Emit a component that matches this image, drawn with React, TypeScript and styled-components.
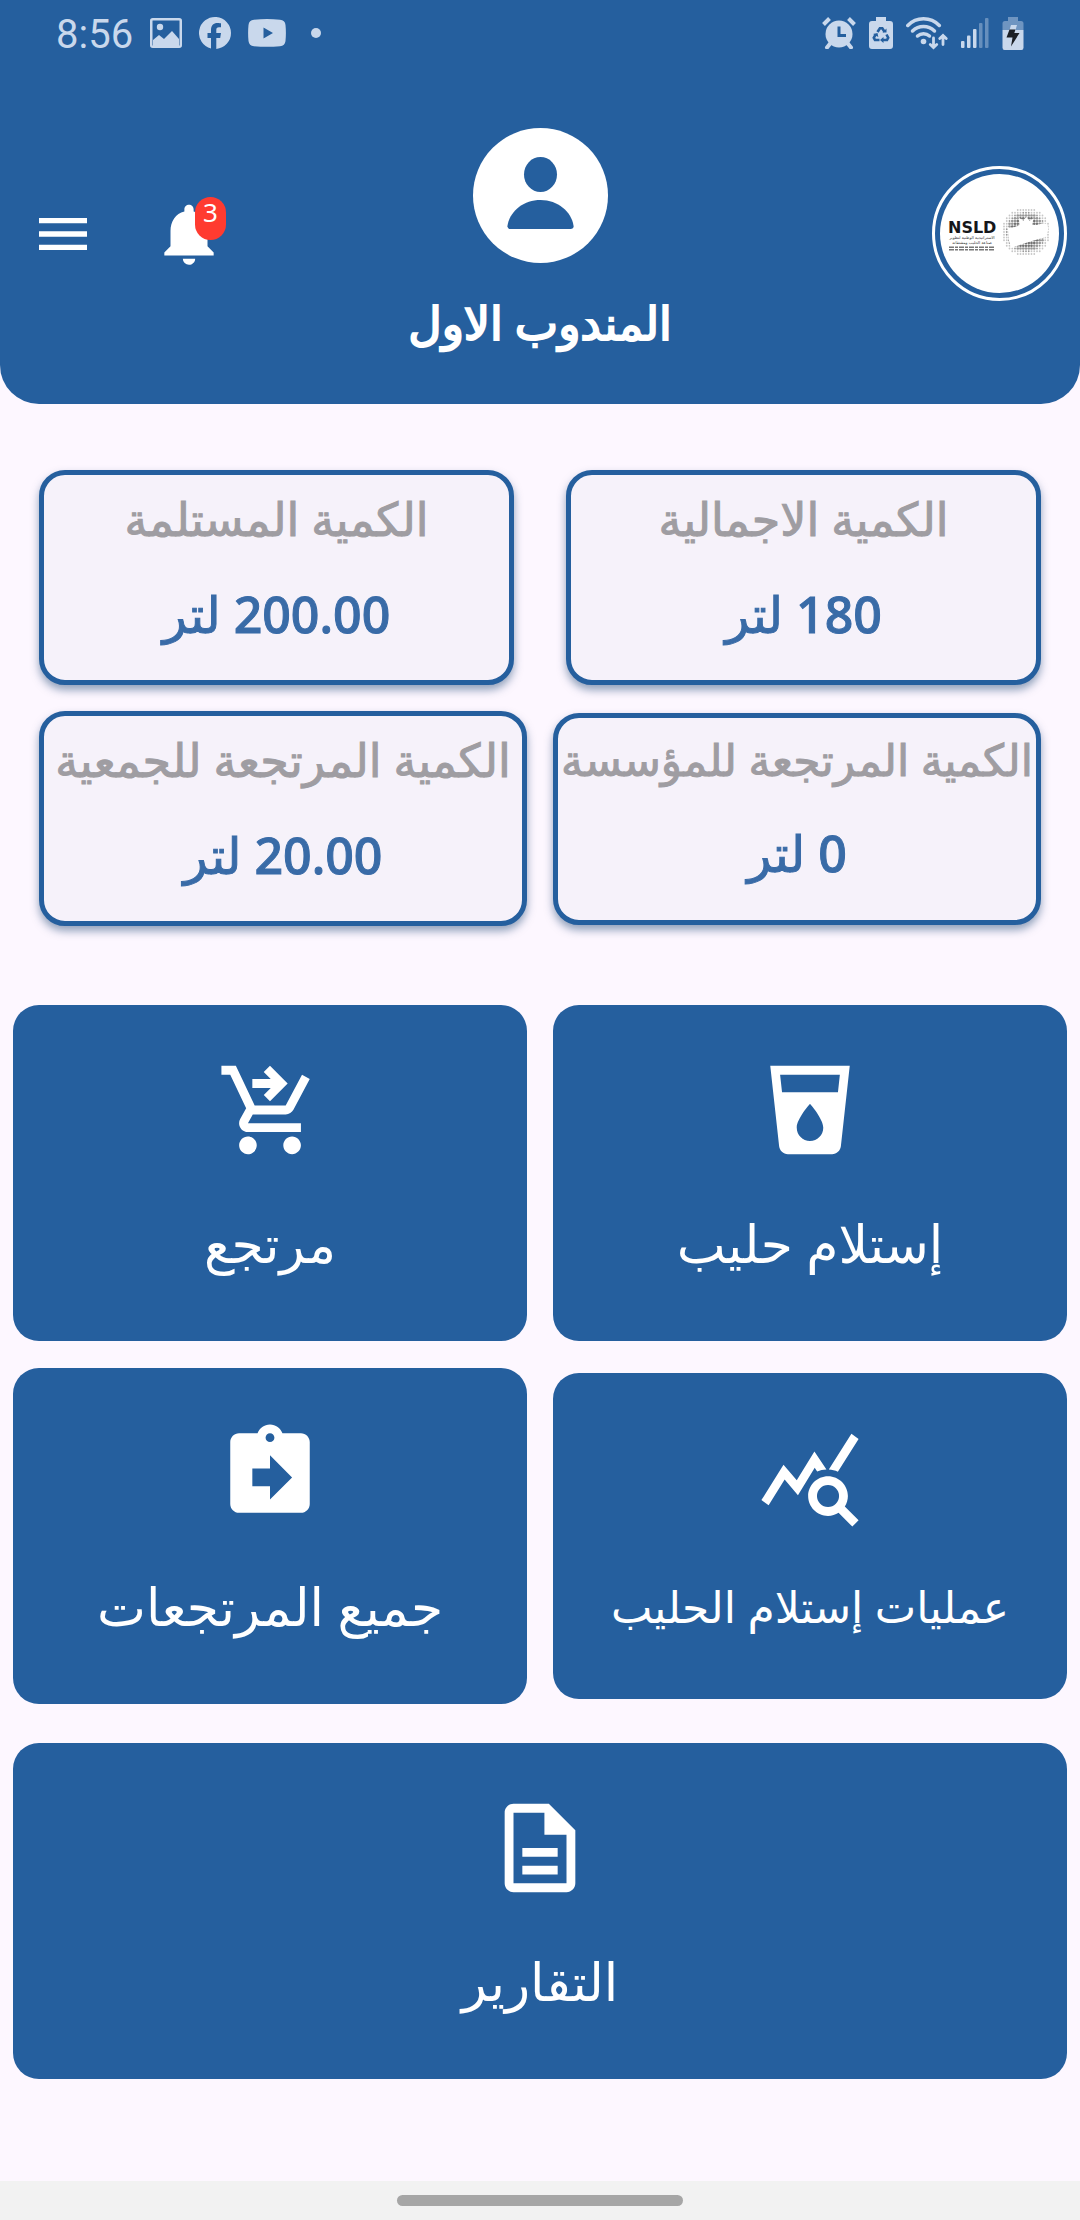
import React from "react";
import styled, { createGlobalStyle } from "styled-components";
import {
  MdMenu,
  MdNotifications,
  MdLocalDrink,
  MdOutlineShoppingCartCheckout,
  MdQueryStats,
  MdOutlineDescription,
} from "react-icons/md";

const BLUE = "#255f9e";
const PAGE = "#fdf7ff";
const STATUS = "#c9d8ec";

const GlobalStyle = createGlobalStyle`
  *, *::before, *::after { box-sizing: border-box; }
  body {
    margin: 0;
    background: ${PAGE};
    font-family: "Noto Sans", "DejaVu Sans", sans-serif;
  }
  button { font: inherit; color: inherit; border: 0; margin: 0; padding: 0; cursor: pointer; }
`;

const Page = styled.div`
  min-height: 100vh;
  display: flex;
  flex-direction: column;
  background: ${PAGE};
`;

const Header = styled.header`
  background: ${BLUE};
  color: #fff;
  border-radius: 0 0 39px 39px;
  padding-bottom: 39px;
`;

const StatusBar = styled.div`
  display: flex;
  align-items: center;
  justify-content: space-between;
  height: 66px;
  padding: 0 56px;
  color: ${STATUS};
`;

const StatusGroup = styled.div<{ $gap: number }>`
  display: flex;
  align-items: center;
  gap: ${(p) => p.$gap}px;
`;

const Clock = styled.time`
  padding-top: 3px;
  font-family: Roboto, sans-serif;
  font-size: 40px;
  line-height: 60px;
`;

const AppBar = styled.div`
  display: grid;
  grid-template-columns: 1fr auto 1fr;
  align-items: center;
  padding: 36px 13px 0;
`;

const LogoSlot = styled.div`
  justify-self: start;
`;

const Logo = styled.svg`
  display: block;
  width: 135px;
  height: 135px;
`;

const Profile = styled.div`
  display: flex;
  flex-direction: column;
  align-items: center;
  gap: 16px;
  padding-top: 26px;
`;

const Avatar = styled.svg`
  display: block;
  width: 135px;
  height: 135px;
`;

const Name = styled.h1`
  margin: 0;
  font-size: 46px;
  font-weight: 400;
  line-height: 86px;
  -webkit-text-stroke: 2px #fff;
  white-space: nowrap;
`;

const Actions = styled.div`
  justify-self: end;
  display: flex;
  flex-direction: row-reverse;
  align-items: center;
  gap: 57px;
  padding-left: 18px;
`;

const IconButton = styled.button`
  position: relative;
  display: flex;
  background: none;
`;

const Badge = styled.span`
  position: absolute;
  top: 0;
  right: 0;
  width: 31px;
  height: 43px;
  border-radius: 16px;
  background: #ff3b30;
  font-size: 26px;
  line-height: 30px;
  text-align: center;
`;

const Main = styled.main`
  padding: 66px 13px 39px;
`;

const Stats = styled.section`
  display: flex;
  flex-direction: column;
  gap: 26px;
  padding: 0 26px;
`;

const StatRow = styled.div<{ $gap: number }>`
  display: grid;
  grid-template-columns: 1fr 1fr;
  align-items: center;
  gap: ${(p) => p.$gap}px;
`;

const StatCard = styled.article<{ $compact?: boolean }>`
  display: flex;
  flex-direction: column;
  align-items: center;
  gap: ${(p) => (p.$compact ? 7 : 9)}px;
  border: 5px solid ${BLUE};
  border-radius: 26px;
  background: #f6f2fa;
  padding: ${(p) => (p.$compact ? "6px 0 15px" : "8px 0 14px")};
  box-shadow: 0 5px 8px rgba(37, 75, 120, 0.5);
  font-size: ${(p) => (p.$compact ? 44 : 46)}px;
  white-space: nowrap;
`;

const StatTitle = styled.h2`
  margin: 0;
  font-size: inherit;
  font-weight: 400;
  line-height: 70px;
  color: #9f9da2;
  -webkit-text-stroke: 1px #9f9da2;
`;

const StatValue = styled.p`
  margin: 0;
  font-size: 50px;
  font-weight: 500;
  line-height: 104px;
  color: #396ba7;
  -webkit-text-stroke: 1px #396ba7;
`;

const Tiles = styled.nav`
  display: flex;
  flex-direction: column;
  gap: 39px;
  margin-top: 79px;
`;

const TileGrid = styled.div`
  display: grid;
  grid-template-columns: 1fr 1fr;
  align-items: center;
  gap: 27px 26px;
`;

const Tile = styled.button<{ $small?: boolean }>`
  display: flex;
  flex-direction: column;
  align-items: center;
  gap: 30px;
  width: 100%;
  padding: 52px 13px 48px;
  border-radius: 26px;
  background: ${BLUE};
  color: #fff;
  font-size: ${(p) => (p.$small ? 44 : 52)}px;
  line-height: ${(p) => (p.$small ? 90 : 100)}px;
  white-space: nowrap;
`;

const NavBar = styled.footer`
  display: flex;
  justify-content: center;
  align-items: center;
  height: 39px;
  margin-top: auto;
  background: #f2f2f2;
`;

const NavHandle = styled.span`
  width: 286px;
  height: 11px;
  border-radius: 6px;
  background: #a6a6a6;
`;

const ImageIcon = () => (
  <svg width="32" height="30" viewBox="0 0 32 30" fill="none">
    <rect x="1.25" y="1.25" width="29.500" height="27.500" rx="1.5" stroke="currentColor" strokeWidth="2.500" />
    <circle cx="10" cy="9" r="3.2" fill="currentColor" />
    <path d="M3 22l6-5 5 4 8-8 7 8v7H3z" fill="currentColor" />
  </svg>
);

const FacebookIcon = () => (
  <svg width="32" height="32" viewBox="0 0 32 32">
    <path
      fill="currentColor"
      d="M32 16a16 16 0 1 0-20 15.5V21H8.500v-5H12v-3c0-4.500 2.500-7 6.500-7 1.700 0 3.500.3 3.500.3v4h-2c-2 0-2.700 1.200-2.700 2.500V16H22l-.8 5h-3.900v10.950A16 16 0 0 0 32 16z"
    />
  </svg>
);

const YoutubeIcon = () => (
  <svg width="38" height="28" viewBox="0 0 38 28">
    <path
      fill="currentColor"
      fillRule="evenodd"
      d="M6 .8Q19-.6 32 .8q5 .5 5.500 5.200.8 8 0 16-.5 4.700-5.500 5.200-13 1.300-26 0-5-.5-5.500-5.200-.8-8 0-16Q1 1.300 6 .8zM15.500 8.500v11l9.500-5.500z"
    />
  </svg>
);

const DotIcon = () => (
  <svg width="26" height="10" viewBox="0 0 26 10">
    <circle cx="13" cy="5" r="5" fill="currentColor" />
  </svg>
);

const AlarmIcon = () => (
  <svg width="34" height="32" viewBox="0 0 34 32">
    <g stroke="currentColor" strokeWidth="4">
      <path d="M1.500 7.500l6-6M32.500 7.500l-6-6" />
      <path d="M5 30.500l4-5M29 30.500l-4-5" strokeLinecap="round" />
    </g>
    <circle cx="17" cy="17" r="13.500" fill="currentColor" />
    <path d="M17 9.500v9h7" fill="none" stroke={BLUE} strokeWidth="3" />
  </svg>
);

const RecycleBatteryIcon = () => (
  <svg width="24" height="32" viewBox="0 0 24 32">
    <path fill="currentColor" d="M7 0h10v4h4q3 0 3 3v22q0 3-3 3H3q-3 0-3-3V7q0-3 3-3h4z" />
    <g fill="none" stroke={BLUE} strokeWidth="2.600">
      <path d="M8.500 15l2.400-3.800h2.400l2.200 3.600" />
      <path d="M17.500 17.500l1.700 3.200-1.200 2.300h-4.500" />
      <path d="M10.500 23H6l-1.200-2.300 1.900-3.200" />
    </g>
    <path fill={BLUE} d="M13.500 15.500h4v-4zM14.500 20v6l-3.500-3zM4 17l4.500-1 .8 4z" />
  </svg>
);

const WifiIcon = () => (
  <svg width="42" height="34" viewBox="0 0 42 34" fill="none" stroke="currentColor" strokeWidth="3.500" strokeLinecap="round">
    <path d="M1.800 9.500a22 22 0 0 1 31.500 0" />
    <path d="M6.500 15a16 16 0 0 1 22 0" />
    <path d="M11.500 20a9 9 0 0 1 12 0" />
    <circle cx="17.500" cy="25.500" r="2.800" fill="currentColor" stroke="none" />
    <path d="M27.500 22v9M24.300 28.500l3.200 3 3.200-3M37 28.500v-9M33.800 22.500l3.200-3 3.200 3" strokeWidth="2.800" />
  </svg>
);

const SignalIcon = () => (
  <svg width="28" height="32" viewBox="0 0 28 32" fill="currentColor">
    <rect x="0" y="24" width="3.500" height="7" rx="1" />
    <rect x="6" y="18.500" width="3.500" height="12.500" rx="1" />
    <rect x="12" y="12" width="3.500" height="19" rx="1" />
    <rect x="18" y="6" width="3.500" height="25" rx="1" opacity=".4" />
    <rect x="24" y="1" width="3.500" height="30" rx="1" opacity=".4" />
  </svg>
);

const ChargingIcon = () => (
  <svg width="22" height="33" viewBox="0 0 22 33">
    <path fill="currentColor" opacity=".45" d="M6 0h10v4h3q2.500 0 2.500 2.500V13H.5V6.500Q.5 4 3 4h3z" />
    <path fill="currentColor" d="M.5 13h21v17.500q0 2.500-2 2.500h-17q-2 0-2-2.500z" />
    <path fill="currentColor" d="M9 8h6l-1.500 5h-6z" />
    <path fill="#1b1f26" d="M7.500 12.500h6L12.300 16h5.200L9 29.500l1.500-9H4.500z" />
  </svg>
);

const AvatarIcon = () => (
  <Avatar viewBox="0 0 135 135" aria-hidden="true">
    <circle cx="67.500" cy="67.500" r="67.500" fill="#fff" />
    <ellipse cx="67.500" cy="46.500" rx="16.500" ry="17.500" fill={BLUE} />
    <path fill={BLUE} d="M37.500 101q-3.500 0-3-3.500C36.500 84 50 72 67.500 72S98.500 84 100.500 97.500q.5 3.500-3 3.500z" />
  </Avatar>
);

/* Halftone disc: full dots in the middle, fading to small ones at the rim. */
const halftone: { x: number; y: number; r: number; o: number }[] = [];
for (let i = -9; i <= 9; i++) {
  for (let j = -9; j <= 9; j++) {
    const d = Math.hypot(i, j) * 2.75;
    if (d < 24.5) {
      halftone.push({ x: 94 + i * 2.75, y: 66 + j * 2.75, r: d < 19 ? 1.3 : 0.9, o: d < 15 ? 0.75 : d < 20 ? 0.55 : 0.3 });
    }
  }
}

const NsldLogo = () => (
  <Logo viewBox="0 0 135 135" role="img" aria-label="NSLD">
    <circle cx="67.500" cy="67.500" r="66" fill="none" stroke="#fff" strokeWidth="3" />
    <circle cx="67.500" cy="67.500" r="59.500" fill="#fff" />
    <g fill="#444">
      {halftone.map((dot) => (
        <circle key={`${dot.x}-${dot.y}`} cx={dot.x} cy={dot.y} r={dot.r} opacity={dot.o} />
      ))}
    </g>
    <path
      fill="#fff"
      d="M75.800 61.300q4 2 11.700-2.300l-.7-7.300 4.700 3 2.700-4 3.300 4 4-2.400-1.300 6.700h4.600l6.700-1.700q6 1 4.300 8l-2.300 6q-8 2-16 4.400l-10 3.300-8.300 3-2.400-8z"
    />
    <text x="16" y="67" direction="ltr" fontFamily="DejaVu Sans, sans-serif" fontWeight="700" fontSize="16" fill="#15161a">
      NSLD
    </text>
    <g fill="#333" fontFamily="DejaVu Sans, sans-serif" textAnchor="middle">
      <text x="40" y="73" fontSize="4">الاستراتيجية الوطنية لتطوير</text>
      <text x="40" y="78" fontSize="4">صناعة الحليب ومشتقاته</text>
    </g>
    <path stroke="#777" strokeWidth="1.500" strokeDasharray="5 1 3 1" d="M17 81.300h46M17 83.800h46" />
  </Logo>
);

const ReturnsIcon = () => (
  <svg width="106" height="106" viewBox="0 0 24 24" fill="currentColor" fillRule="evenodd" aria-hidden="true">
    <path d="M19 3h-4.180C14.400 1.840 13.300 1 12 1s-2.400.84-2.820 2H5c-1.100 0-2 .9-2 2v14c0 1.100.9 2 2 2h14c1.100 0 2-.9 2-2V5c0-1.100-.9-2-2-2zm-7 0c.55 0 1 .45 1 1s-.45 1-1 1-1-.45-1-1 .45-1 1-1zm-4 12h4v3l5-5-5-5v3H8v4z" />
  </svg>
);

const statRows = [
  {
    gap: 52,
    cards: [
      { title: "الكمية الاجمالية", value: "180 لتر" },
      { title: "الكمية المستلمة", value: "200.00 لتر" },
    ],
  },
  {
    gap: 26,
    cards: [
      { title: "الكمية المرتجعة للمؤسسة", value: "0 لتر", compact: true },
      { title: "الكمية المرتجعة للجمعية", value: "20.00 لتر" },
    ],
  },
];

const tiles = [
  { label: "إستلام حليب", icon: <MdLocalDrink size={106} /> },
  { label: "مرتجع", icon: <MdOutlineShoppingCartCheckout size={106} /> },
  { label: "عمليات إستلام الحليب", icon: <MdQueryStats size={106} />, small: true },
  { label: "جميع المرتجعات", icon: <ReturnsIcon /> },
];

export default function App() {
  return (
    <Page dir="rtl" lang="ar">
      <GlobalStyle />
      <Header>
        <StatusBar dir="ltr">
          <StatusGroup $gap={17}>
            <Clock>8:56</Clock>
            <ImageIcon />
            <FacebookIcon />
            <YoutubeIcon />
            <DotIcon />
          </StatusGroup>
          <StatusGroup $gap={13}>
            <AlarmIcon />
            <RecycleBatteryIcon />
            <WifiIcon />
            <SignalIcon />
            <ChargingIcon />
          </StatusGroup>
        </StatusBar>
        <AppBar>
          <LogoSlot>
            <NsldLogo />
          </LogoSlot>
          <Profile>
            <AvatarIcon />
            <Name>المندوب الاول</Name>
          </Profile>
          <Actions>
            <IconButton type="button" aria-label="القائمة">
              <MdMenu size={64} />
            </IconButton>
            <IconButton type="button" aria-label="الإشعارات">
              <MdNotifications size={74} />
              <Badge>3</Badge>
            </IconButton>
          </Actions>
        </AppBar>
      </Header>
      <Main>
        <Stats>
          {statRows.map((row) => (
            <StatRow key={row.gap} $gap={row.gap}>
              {row.cards.map((card) => (
                <StatCard key={card.title} $compact={"compact" in card}>
                  <StatTitle>{card.title}</StatTitle>
                  <StatValue>{card.value}</StatValue>
                </StatCard>
              ))}
            </StatRow>
          ))}
        </Stats>
        <Tiles>
          <TileGrid>
            {tiles.map((tile) => (
              <Tile key={tile.label} type="button" $small={tile.small}>
                {tile.icon}
                <span>{tile.label}</span>
              </Tile>
            ))}
          </TileGrid>
          <Tile type="button">
            <MdOutlineDescription size={106} />
            <span>التقارير</span>
          </Tile>
        </Tiles>
      </Main>
      <NavBar>
        <NavHandle />
      </NavBar>
    </Page>
  );
}
